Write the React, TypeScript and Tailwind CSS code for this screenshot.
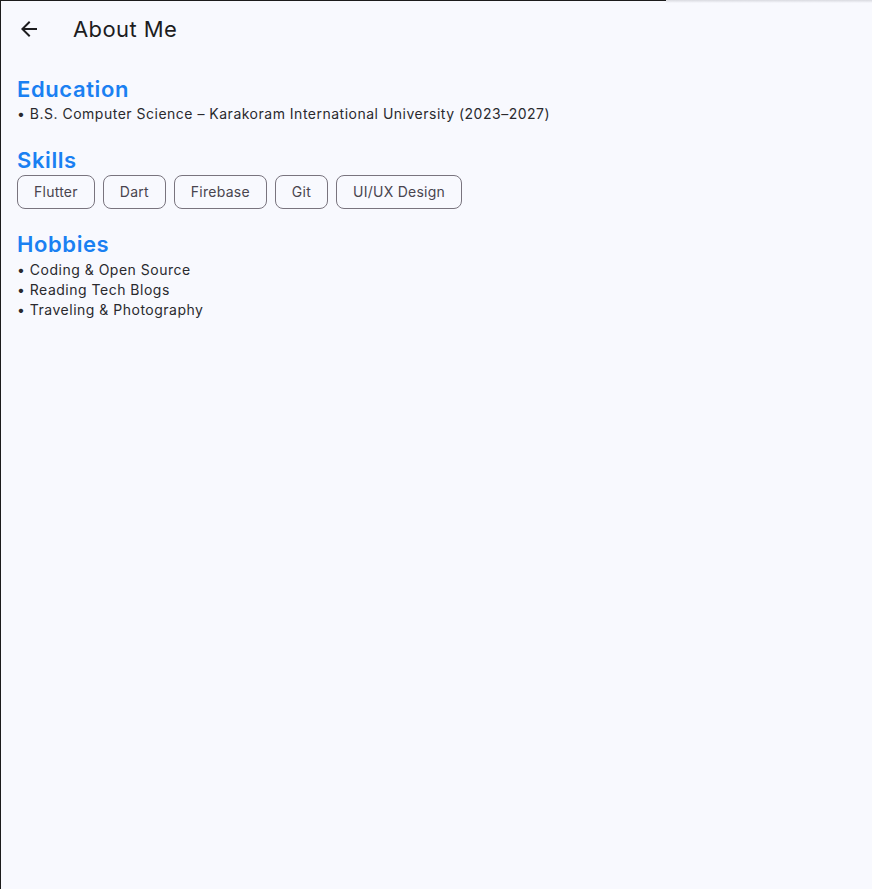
import React from 'react';

const skills = ['Flutter', 'Dart', 'Firebase', 'Git', 'UI/UX Design'];
const hobbies = ['Coding & Open Source', 'Reading Tech Blogs', 'Traveling & Photography'];

const font = { fontFamily: 'Inter, "Noto Sans", sans-serif' };

const BackArrow = () => (
  <svg width="24" height="24" viewBox="0 0 24 24" fill="currentColor">
    <path d="M20 11H7.83l5.59-5.59L12 4l-8 8 8 8 1.41-1.41L7.83 13H20v-2z" />
  </svg>
);

const SectionTitle = ({ children }: { children: React.ReactNode }) => (
  <h2 className="text-[22px] leading-[30px] font-semibold text-[#1a80f2] tracking-[0.6px]">{children}</h2>
);

const App = () => {
  return (
    <main
      className="min-h-screen h-[889px] bg-[#f8f9fe] border-l border-[#1c1c1c] relative text-[#2a2a2e]"
      style={font}
    >
      {/* top window edge */}
      <div className="absolute top-0 left-0 w-[665px] h-px bg-[#1c1c1c]" />
      <div className="absolute top-0 left-[665px] right-0 h-[3px] bg-gradient-to-b from-[#d9dae0] to-transparent" />

      {/* App bar */}
      <header className="h-14 pt-0.5 flex items-center px-4">
        <button className="w-6 h-6 flex items-center justify-center text-[#1d1d1f]">
          <BackArrow />
        </button>
        <h1 className="ml-8 text-[22px] font-normal tracking-[0.4px] text-[#1d1d1f]">About Me</h1>
      </header>

      {/* Content */}
      <div className="px-4 pt-[18px] tracking-[0.5px]">
        <section>
          <SectionTitle>Education</SectionTitle>
          <p className="text-sm leading-5">• B.S. Computer Science – Karakoram International University (2023–2027)</p>
        </section>

        <section className="mt-[21px]">
          <SectionTitle>Skills</SectionTitle>
          <div className="flex flex-wrap gap-2">
            {skills.map((s) => (
              <span
                key={s}
                className="h-[34px] px-4 flex items-center rounded-lg border border-[#79747e] text-sm tracking-[0.25px] text-[#49454f]"
              >
                {s}
              </span>
            ))}
          </div>
        </section>

        <section className="mt-5">
          <SectionTitle>Hobbies</SectionTitle>
          <ul className="text-sm leading-5 pt-px">
            {hobbies.map((h) => (
              <li key={h}>• {h}</li>
            ))}
          </ul>
        </section>
      </div>
    </main>
  );
};

export default App;
